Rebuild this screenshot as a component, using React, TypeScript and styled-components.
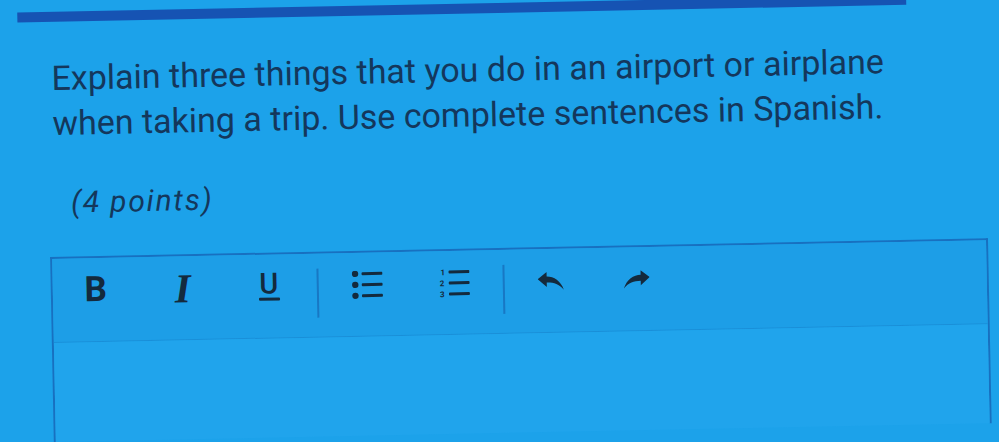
import React from "react";
import styled, { createGlobalStyle } from "styled-components";

const Global = createGlobalStyle`
  html, body { margin: 0; padding: 0; }
  body {
    width: 999px;
    height: 442px;
    overflow: hidden;
    background: #1ca2ea;
    font-family: Roboto, "Liberation Sans", Arial, sans-serif;
  }
`;

const Page = styled.div`
  width: 999px;
  height: 442px;
  transform: rotate(-1.15deg);
  transform-origin: 50px 300px;
  display: flex;
  flex-direction: column;
`;

const TopBar = styled.div`
  margin: 12px 0 0 23px;
  width: 889px;
  height: 10px;
  background: #1653b3;
  flex: none;
`;

const Question = styled.div`
  margin: 34px 0 0 56px;
  color: #14375c;
  font-size: 34px;
  line-height: 45px;
  font-weight: 400;
  flex: none;
`;

const Line = styled.div`
  white-space: nowrap;
`;

const Points = styled.div`
  margin: 40px 0 0 73px;
  color: #14375c;
  font-size: 30px;
  line-height: 34px;
  font-style: italic;
  letter-spacing: 1.8px;
  flex: none;
`;

const Editor = styled.div`
  margin: 37px 0 0 51px;
  width: 934px;
  flex: 1;
  border-left: 2px solid #1870c0;
  border-right: 2px solid #1870c0;
  border-top: 2px solid #1870c0;
  display: flex;
  flex-direction: column;
`;

const Toolbar = styled.div`
  height: 84px;
  box-sizing: border-box;
  background: #1d9ee7;
  border-bottom: 1px solid #1a8fd8;
  display: flex;
  align-items: flex-start;
  padding-top: 13px;
  flex: none;
`;

const Content = styled.div`
  flex: 1;
  background: #20a4ec;
`;

const Tool = styled.div<{ $w: number; $ml: number; $mt?: number }>`
  width: ${(p) => p.$w}px;
  margin-left: ${(p) => p.$ml}px;
  margin-top: ${(p) => p.$mt ?? 0}px;
  height: 30px;
  display: flex;
  align-items: center;
  justify-content: center;
  color: #142a3d;
  flex: none;
`;

const BoldGlyph = styled.span`
  font-family: Roboto, "Liberation Sans", sans-serif;
  font-weight: 700;
  font-size: 35px;
  line-height: 30px;
`;

const ItalicGlyph = styled.span`
  font-family: "Liberation Serif", "DejaVu Serif", serif;
  font-weight: 700;
  font-style: italic;
  font-size: 41px;
  line-height: 30px;
`;

const UnderGlyph = styled.span`
  font-family: Roboto, "Liberation Sans", sans-serif;
  font-weight: 500;
  font-size: 29px;
  line-height: 21px;
  display: inline-flex;
  flex-direction: column;
  align-items: center;
  &::after {
    content: "";
    display: block;
    width: 21px;
    height: 3px;
    margin-top: 3px;
    background: #142a3d;
    border-radius: 1px;
  }
`;

const Separator = styled.div<{ $ml: number }>`
  width: 2px;
  height: 49px;
  margin-left: ${(p) => p.$ml}px;
  margin-top: 2px;
  background: #1878c4;
  flex: none;
`;

const BulletIcon = () => (
  <svg width="31" height="28" viewBox="0 0 31 28">
    <g fill="#142a3d">
      <circle cx="3.5" cy="3" r="3.2" />
      <circle cx="3.5" cy="14" r="3.2" />
      <circle cx="3.5" cy="25" r="3.2" />
      <rect x="10" y="1.5" width="21" height="3" rx="1" />
      <rect x="10" y="12.5" width="21" height="3" rx="1" />
      <rect x="10" y="23.5" width="21" height="3" rx="1" />
    </g>
  </svg>
);

const NumberIcon = () => (
  <svg width="31" height="30" viewBox="0 0 31 30">
    <g fill="#142a3d">
      <text x="2" y="7" fontSize="8" fontFamily="Roboto, sans-serif" fontWeight="700">1</text>
      <text x="1" y="18" fontSize="8" fontFamily="Roboto, sans-serif" fontWeight="700">2</text>
      <text x="1" y="29" fontSize="8" fontFamily="Roboto, sans-serif" fontWeight="700">3</text>
      <rect x="10" y="2.5" width="21" height="3" rx="1" />
      <rect x="10" y="13.5" width="21" height="3" rx="1" />
      <rect x="10" y="24.5" width="21" height="3" rx="1" />
    </g>
  </svg>
);

const ArrowIcon = ({ flip }: { flip?: boolean }) => (
  <svg
    width="26"
    height="19"
    viewBox="0 0 26 19"
    style={flip ? { transform: "scaleX(-1)" } : undefined}
  >
    <path
      fill="#142a3d"
      d="M0 7 L9 0 L9 4.5 C16 4.5 23 9 26 18 C21 12 16 10.5 9 10.5 L9 15 Z"
    />
  </svg>
);

export default function App() {
  return (
    <>
      <Global />
      <Page>
        <TopBar />
        <Question>
          <Line>Explain three things that you do in an airport or airplane</Line>
          <Line>when taking a trip. Use complete sentences in Spanish.</Line>
        </Question>
        <Points>(4 points)</Points>
        <Editor>
          <Toolbar>
            <Tool $w={24} $ml={31} $mt={4}>
              <BoldGlyph>B</BoldGlyph>
            </Tool>
            <Tool $w={24} $ml={63} $mt={4}>
              <ItalicGlyph>I</ItalicGlyph>
            </Tool>
            <Tool $w={24} $ml={62} $mt={4}>
              <UnderGlyph>U</UnderGlyph>
            </Tool>
            <Separator $ml={36} />
            <Tool $w={31} $ml={33} $mt={4}>
              <BulletIcon />
            </Tool>
            <Tool $w={31} $ml={56} $mt={4}>
              <NumberIcon />
            </Tool>
            <Separator $ml={33} />
            <Tool $w={26} $ml={33} $mt={4}>
              <ArrowIcon />
            </Tool>
            <Tool $w={26} $ml={60} $mt={4}>
              <ArrowIcon flip />
            </Tool>
          </Toolbar>
          <Content />
        </Editor>
      </Page>
    </>
  );
}
